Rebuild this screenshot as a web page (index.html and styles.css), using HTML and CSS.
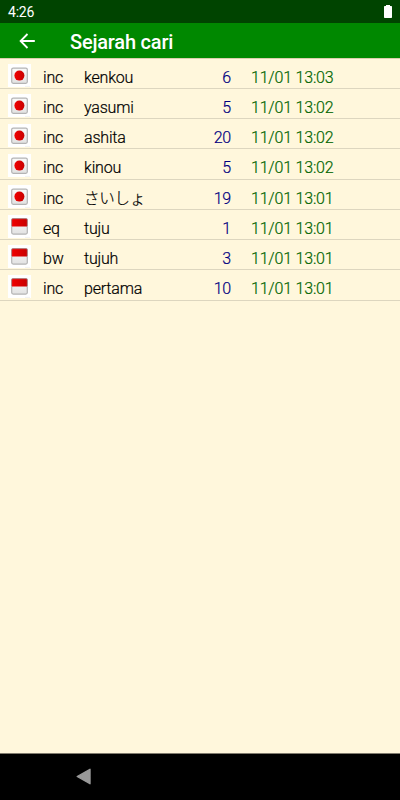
FILE: index.html
```
<!DOCTYPE html>
<html lang="id">
<head>
  <meta charset="utf-8">
  <title>Sejarah cari</title>
  <link rel="stylesheet" href="styles.css">
</head>

<body>

  <!-- Flag icons shared by the rows -->
  <svg class="symbols">
    <linearGradient id="shade" x1="0" y1="0" x2="0" y2="1">
      <stop offset="0" stop-color="#fafafa"/>
      <stop offset="1" stop-color="#e2e2e2"/>
    </linearGradient>
    <linearGradient id="red" x1="0" y1="0" x2="1" y2="0">
      <stop offset="0" stop-color="#f00000"/>
      <stop offset="1" stop-color="#c80000"/>
    </linearGradient>
    <symbol id="jp" viewBox="0 0 23 23">
      <rect width="23" height="23" fill="#fff"/>
      <rect x="3.7" y="4.1" width="15.6" height="15.2" rx="1.5" fill="url(#shade)" stroke="#b4b4b4" stroke-width="1.2"/>
      <circle cx="11.4" cy="11.6" r="5" fill="url(#red)"/>
      <path d="M17 22.4h5" stroke="#eee" stroke-width=".8"/>
    </symbol>
    <symbol id="id" viewBox="0 0 23 23">
      <rect width="23" height="23" fill="#fff"/>
      <rect x="3.7" y="3.7" width="15.6" height="15.4" rx="1.5" fill="url(#shade)" stroke="#b4b4b4" stroke-width="1.2"/>
      <path d="M4 4h15v7.5H4z" fill="url(#red)"/>
      <path d="M3.7 11V4.9a1.2 1.2 0 0 1 1.2-1.2h13.2a1.2 1.2 0 0 1 1.2 1.2V11" fill="none" stroke="#b86464" stroke-width=".8"/>
      <path d="M17 22.4h5" stroke="#eee" stroke-width=".8"/>
    </symbol>
  </svg>

  <!-- Status bar -->
  <div class="status">
    <span>4:26</span>
    <svg class="battery" width="10" height="14" viewBox="0 0 10 14">
      <path d="M3 1h4v1h1.3q.7 0 .7.7v10.6q0 .7-.7.7H1.7q-.7 0-.7-.7V2.7Q1 2 1.7 2H3z" fill="#fff"/>
    </svg>
  </div>

  <!-- Title bar -->
  <div class="toolbar">
    <svg class="back" width="16" height="16" viewBox="0 0 16 16">
      <path d="M15.8 8H1.8M8.5 1L1.6 8l6.9 7" fill="none" stroke="#fff" stroke-width="1.8"/>
    </svg>
    <h1 class="title">Sejarah cari</h1>
  </div>

  <!-- Search history -->
  <div class="history">
    <div class="row">
      <svg class="flag"><use href="#jp"/></svg>
      <span class="mode">inc</span><span class="word">kenkou</span>
      <span class="count">6</span><span class="date">11/01 13:03</span>
    </div>
    <div class="row">
      <svg class="flag"><use href="#jp"/></svg>
      <span class="mode">inc</span><span class="word">yasumi</span>
      <span class="count">5</span><span class="date">11/01 13:02</span>
    </div>
    <div class="row">
      <svg class="flag"><use href="#jp"/></svg>
      <span class="mode">inc</span><span class="word">ashita</span>
      <span class="count">20</span><span class="date">11/01 13:02</span>
    </div>
    <div class="row">
      <svg class="flag"><use href="#jp"/></svg>
      <span class="mode">inc</span><span class="word">kinou</span>
      <span class="count">5</span><span class="date">11/01 13:02</span>
    </div>
    <div class="row">
      <svg class="flag"><use href="#jp"/></svg>
      <span class="mode">inc</span><span class="word" lang="ja">さいしょ</span>
      <span class="count">19</span><span class="date">11/01 13:01</span>
    </div>
    <div class="row">
      <svg class="flag"><use href="#id"/></svg>
      <span class="mode">eq</span><span class="word">tuju</span>
      <span class="count">1</span><span class="date">11/01 13:01</span>
    </div>
    <div class="row">
      <svg class="flag"><use href="#id"/></svg>
      <span class="mode">bw</span><span class="word">tujuh</span>
      <span class="count">3</span><span class="date">11/01 13:01</span>
    </div>
    <div class="row">
      <svg class="flag"><use href="#id"/></svg>
      <span class="mode">inc</span><span class="word">pertama</span>
      <span class="count">10</span><span class="date">11/01 13:01</span>
    </div>
  </div>

  <!-- Navigation bar -->
  <div class="navbar">
    <svg width="16" height="18" viewBox="0 0 16 18">
      <path d="M14 1.3v14.4L1.2 8.5z" fill="#999" stroke="#999" stroke-width="1.4" stroke-linejoin="round"/>
    </svg>
  </div>

</body>
</html>
```
FILE: styles.css
```
* {
  box-sizing: border-box;
}

body {
  display: flex;
  flex-direction: column;
  height: 100vh;
  margin: 0;
  background: #fff7dc;
  font-family: Roboto, "Noto Sans CJK JP", sans-serif;
  overflow: hidden;
}

.symbols {
  position: absolute;
  width: 0;
  height: 0;
}

.status {
  display: flex;
  justify-content: space-between;
  flex: none;
  height: 23px;
  padding: 4px 7px 0 8px;
  background: #004400;
  color: #fff;
  font-size: 14px;
  letter-spacing: -0.2px;
  line-height: 17px;
}

.toolbar {
  display: flex;
  align-items: center;
  flex: none;
  height: 35px;
  padding: 1px 0 0 19px;
  background: #008800;
  color: #fff;
}

.title {
  margin: 1px 0 0 35px;
  font-size: 20px;
  font-weight: 500;
  letter-spacing: -0.2px;
  line-height: 24px;
}

.history {
  flex: 1;
  padding-top: 0.5px;
  box-shadow: inset 0 1px #dccfad;
}

/* One search: flag, match mode, word, hits, date */
.row {
  display: grid;
  grid-template-columns: 35px 41px 120px 27px 1fr;
  height: 30.25px;
  padding: 5px 0 0 8px;
  border-bottom: 1px solid #ddd6bf;
  font-size: 16px;
  font-weight: 300;
  letter-spacing: -0.2px;
  line-height: 28px;
  color: #000;
  -webkit-text-stroke: 0.2px;
}

.word:lang(ja) {
  font-size: 15.5px;
}

.flag {
  width: 23px;
  height: 23px;
}

.count {
  text-align: right;
  color: #000080;
}

.date {
  padding-left: 20px;
  color: #006400;
}

.navbar {
  flex: none;
  height: 47px;
  padding: 14px 0 0 76px;
  border-top: 1px solid #807b6e;
  background: #000;
}
```
